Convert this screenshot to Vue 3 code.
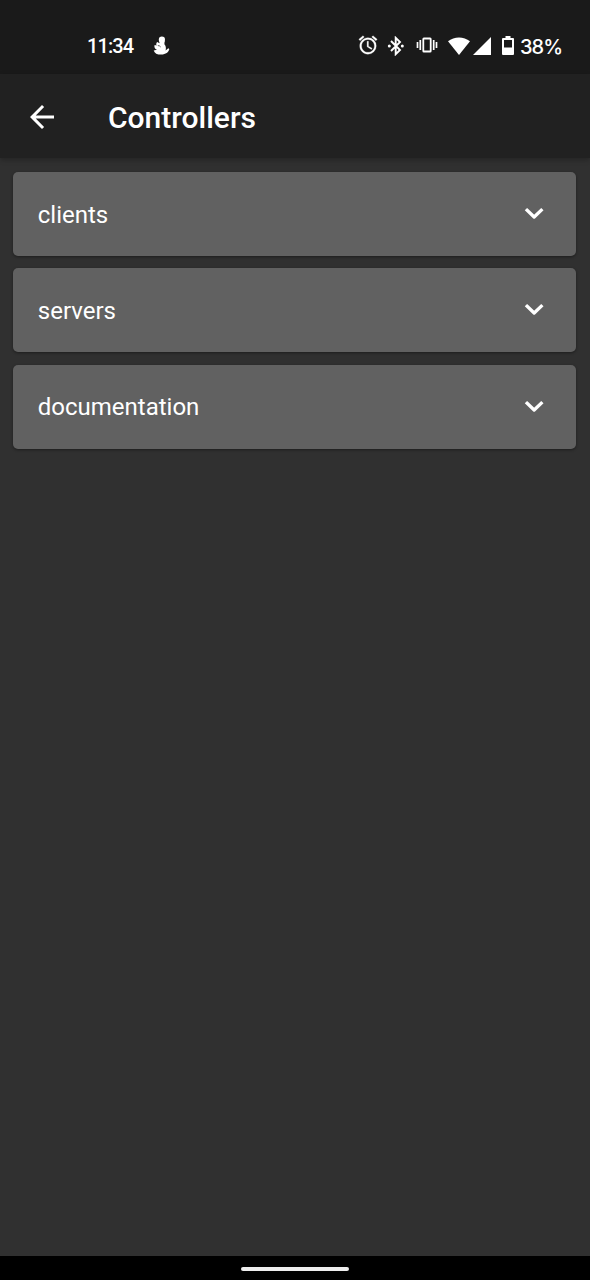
<script setup>
const sections = ['clients', 'servers', 'documentation']
</script>

<template>
  <div class="screen">
    <div class="status">
      <span class="time">11:34</span>
      <svg class="notice" width="18" height="20" viewBox="0 0 18 20">
        <circle cx="9.900" cy="3.700" r="3.100" />
        <path d="M7.400 5h5.200l-.2 3.200c1.400 1.500 1.900 4 1.200 6.300l2.700-2.300 1 .9c-.7 3.200-3.500 5.500-8 5.500-4.200 0-6.800-1.400-7.600-4.200l3.300-.6C2.600 13 2 10.800 2.600 9l2 .6C4 8.300 4.200 6.900 5.200 6l2.300 1.200z" />
        <path d="M5.800 9.500q2.200.2 2.900 1.500" fill="none" stroke="#1a1a1a" stroke-width=".7" />
      </svg>
      <div class="indicators">
        <svg class="alarm" width="22" height="22" viewBox="0 0 24 24">
          <path stroke="#fff" stroke-width=".3" d="M22 5.720l-4.600-3.860-1.290 1.530 4.600 3.860L22 5.720zM7.880 3.390L6.600 1.860 2 5.710l1.290 1.530 4.590-3.850zM12.500 8H11v6l4.750 2.850.75-1.230-4-2.370V8zM12 4c-4.970 0-9 4.030-9 9s4.020 9 9 9a9 9 0 0 0 0-18zm0 16c-3.870 0-7-3.130-7-7s3.130-7 7-7 7 3.130 7 7-3.130 7-7 7z" />
        </svg>
        <svg class="bluetooth" width="18" height="20" viewBox="0 0 18 20">
          <path d="M4 5l9 9-4.300 4.200V1.800L13 6l-9 9" fill="none" stroke="#fff" stroke-width="1.900" />
          <circle cx="2.300" cy="10" r="1.500" />
          <circle cx="15.300" cy="10" r="1.500" />
        </svg>
        <svg class="vibrate" width="22" height="18" viewBox="0 0 22 18">
          <path d="M1.500 6v6M4.300 4v10M17.700 4v10M20.500 6v6" fill="none" stroke="#fff" stroke-width="1.700" />
          <rect x="7.300" y="2.500" width="7.400" height="13" rx=".6" fill="none" stroke="#fff" stroke-width="1.800" />
        </svg>
        <svg class="wifi" width="22" height="18" viewBox="0 0 22 18">
          <path d="M11 18L0 4.300C6.200-.8 15.800-.8 22 4.300z" />
        </svg>
        <svg class="signal" width="18" height="18" viewBox="0 0 18 18">
          <path d="M18 0v18H0z" />
        </svg>
        <svg class="battery" width="12" height="19" viewBox="0 0 12 19">
          <path fill-rule="evenodd" d="M3.500 0h5v2H11a1 1 0 0 1 1 1v15a1 1 0 0 1-1 1H1a1 1 0 0 1-1-1V3a1 1 0 0 1 1-1h2.500zM2 4v7.500h8V4z" />
        </svg>
        <span class="percent">38%</span>
      </div>
    </div>
    <header class="bar">
      <svg width="36" height="36" viewBox="0 0 24 24">
        <path d="M20 11H7.830l5.590-5.590L12 4l-8 8 8 8 1.410-1.410L7.830 13H20v-2z" />
      </svg>
      <h1>Controllers</h1>
    </header>
    <main class="list">
      <div v-for="name in sections" :key="name" class="card">
        <span>{{ name }}</span>
        <svg width="36" height="36" viewBox="0 0 24 24">
          <path d="M7.400 9.500l4.700 4.500 4.700-4.500" fill="none" stroke="#fff" stroke-width="2.200" stroke-linecap="square" stroke-linejoin="round" />
        </svg>
      </div>
    </main>
    <footer class="nav"><div class="pill"></div></footer>
  </div>
</template>

<style>
body {
  background: #303030;
}
</style>

<style scoped>
.screen {
  display: flex;
  flex-direction: column;
  width: 590px;
  height: 1280px;
  overflow: hidden;
  background: #303030;
  color: #fff;
  font-family: Roboto, sans-serif;
}
svg {
  display: block;
  flex: none;
  fill: #fff;
}
.status {
  display: flex;
  flex: none;
  align-items: center;
  box-sizing: border-box;
  height: 74px;
  padding: 17px 29px 0 87px;
  background: #1a1a1a;
  font-size: 20px;
  font-weight: 500;
  line-height: 24px;
}
.time {
  width: 65px;
  padding-top: 1px;
  letter-spacing: -0.9px;
}
.indicators {
  display: flex;
  align-items: center;
  margin-left: auto;
}
.alarm {
  margin-bottom: 1px;
}
.bluetooth {
  margin-left: 8px;
}
.vibrate {
  margin-bottom: 1px;
  margin-left: 11px;
}
.wifi {
  margin-left: 10px;
}
.signal {
  margin-left: 3px;
}
.battery {
  margin-left: 11px;
}
.percent {
  width: 41px;
  margin-left: 6px;
  padding-top: 2px;
  font-family: Inter, Roboto, sans-serif;
  font-size: 20px;
  font-weight: 500;
  letter-spacing: -1px;
}
.bar {
  display: flex;
  flex: none;
  align-items: center;
  box-sizing: border-box;
  height: 84px;
  padding: 2px 24px 0;
  background: #212121;
  box-shadow: 0 2px 5px rgba(0, 0, 0, 0.25);
}
h1 {
  margin: 0 0 0 48px;
  padding-top: 2px;
  font-size: 30px;
  font-weight: 500;
  line-height: 36px;
}
.list {
  display: flex;
  flex: 1;
  flex-direction: column;
  gap: 12.3px;
  padding: 14px 14px 0 13.300px;
}
.card {
  display: flex;
  align-items: center;
  justify-content: space-between;
  box-sizing: border-box;
  height: 84px;
  padding: 0 24px 0 24.500px;
  border-radius: 5px;
  background: #616161;
  box-shadow: 0 1px 3px rgba(0, 0, 0, 0.4);
  font-size: 24px;
  line-height: 28px;
}
.card span {
  padding-top: 1px;
}
.nav {
  display: flex;
  flex: none;
  justify-content: center;
  box-sizing: border-box;
  height: 24px;
  padding-top: 11px;
  background: #000;
}
.pill {
  width: 108px;
  height: 4px;
  border-radius: 2px;
  background: #eee;
}
</style>
